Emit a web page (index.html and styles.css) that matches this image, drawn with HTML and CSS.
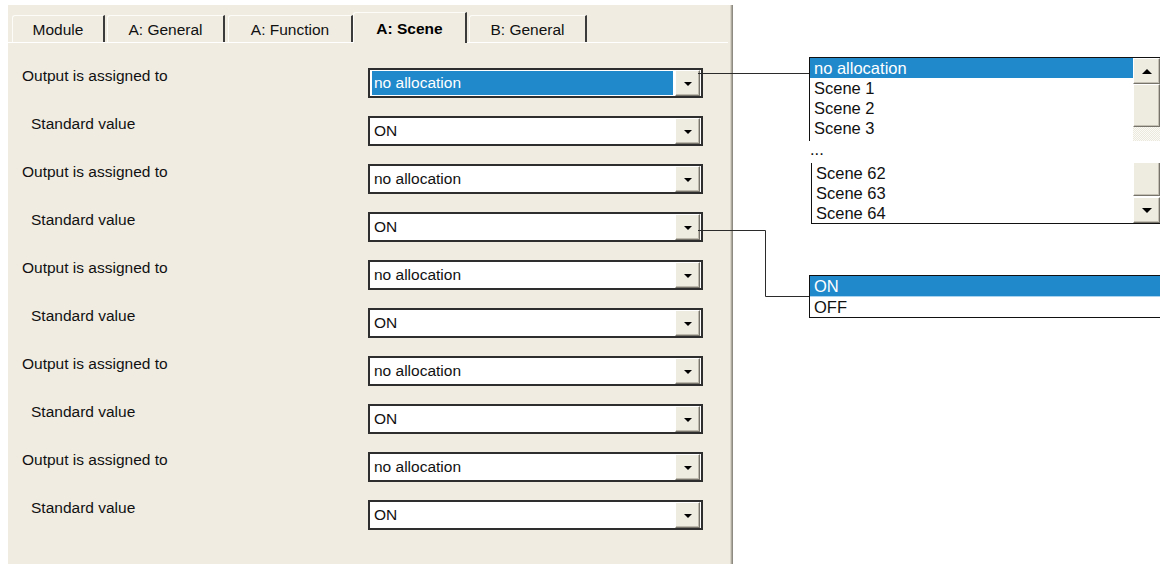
FILE: index.html
```html
<!DOCTYPE html>
<html lang="en">
<head>
<meta charset="utf-8">
<title>A: Scene</title>
<link rel="stylesheet" href="styles.css">
</head>
<body>
<div class="page">
  <section class="dialog">
    <nav class="tabs">
      <span class="tab tab-module">Module</span>
      <span class="tab tab-a-general">A: General</span>
      <span class="tab tab-a-function">A: Function</span>
      <span class="tab tab-a-scene is-active">A: Scene</span>
      <span class="tab tab-b-general">B: General</span>
    </nav>

    <div class="params">
      <div class="param">
        <span class="param-label">Output is assigned to</span>
        <div class="combo"><span class="combo-value is-selected">no allocation</span><span class="combo-btn"></span></div>
      </div>
      <div class="param param-sub">
        <span class="param-label">Standard value</span>
        <div class="combo"><span class="combo-value">ON</span><span class="combo-btn"></span></div>
      </div>
      <div class="param">
        <span class="param-label">Output is assigned to</span>
        <div class="combo"><span class="combo-value">no allocation</span><span class="combo-btn"></span></div>
      </div>
      <div class="param param-sub">
        <span class="param-label">Standard value</span>
        <div class="combo"><span class="combo-value">ON</span><span class="combo-btn"></span></div>
      </div>
      <div class="param">
        <span class="param-label">Output is assigned to</span>
        <div class="combo"><span class="combo-value">no allocation</span><span class="combo-btn"></span></div>
      </div>
      <div class="param param-sub">
        <span class="param-label">Standard value</span>
        <div class="combo"><span class="combo-value">ON</span><span class="combo-btn"></span></div>
      </div>
      <div class="param">
        <span class="param-label">Output is assigned to</span>
        <div class="combo"><span class="combo-value">no allocation</span><span class="combo-btn"></span></div>
      </div>
      <div class="param param-sub">
        <span class="param-label">Standard value</span>
        <div class="combo"><span class="combo-value">ON</span><span class="combo-btn"></span></div>
      </div>
      <div class="param">
        <span class="param-label">Output is assigned to</span>
        <div class="combo"><span class="combo-value">no allocation</span><span class="combo-btn"></span></div>
      </div>
      <div class="param param-sub">
        <span class="param-label">Standard value</span>
        <div class="combo"><span class="combo-value">ON</span><span class="combo-btn"></span></div>
      </div>
    </div>
  </section>

  <aside class="callouts">
    <!-- scene choices: first entries, gap, last entries -->
    <div class="list-head">
      <div class="list-items">
        <div class="list-row is-selected">no allocation</div>
        <div class="list-row">Scene 1</div>
        <div class="list-row">Scene 2</div>
        <div class="list-row">Scene 3</div>
      </div>
      <div class="scrollbar">
        <span class="sb-btn sb-up"></span>
        <span class="sb-thumb"></span>
        <span class="sb-track"></span>
      </div>
    </div>
    <div class="list-gap">...</div>
    <div class="list-tail">
      <div class="list-items">
        <div class="list-row">Scene 62</div>
        <div class="list-row">Scene 63</div>
        <div class="list-row">Scene 64</div>
      </div>
      <div class="scrollbar">
        <span class="sb-thumb sb-thumb-end"></span>
        <span class="sb-btn sb-down"></span>
      </div>
    </div>

    <!-- standard value choices -->
    <div class="list-onoff">
      <div class="list-row is-selected row-on">ON</div>
      <div class="list-row">OFF</div>
    </div>
  </aside>

  <svg class="leaders" width="1160" height="564" viewBox="0 0 1160 564">
    <path d="M698 73.5 H809" />
    <path d="M698 230.5 H765.5 V296.5 H809" />
  </svg>
</div>
</body>
</html>
```

FILE: styles.css
```css
html, body {
  margin: 0;
  background: #fff;
}

body {
  width: 1160px;
  height: 564px;
  overflow: hidden;
  font-family: "Liberation Sans", Arial, sans-serif;
  color: #111;
}

.page {
  position: relative;
  display: flex;
  align-items: flex-start;
  height: 564px;
}

/* ---------- parameter dialog ---------- */
.dialog {
  box-sizing: border-box;
  width: 722px;
  height: 559px;
  margin: 5px 0 0 8px;
  padding-top: 7px;
  background: #f0ece2;
  box-shadow: 1px 0 0 #d7d3c7, 2px 0 0 #aeaa9e, 3px 0 0 #8e8b82;
}

.tabs {
  display: flex;
  align-items: flex-end;
  height: 30px;
  padding-left: 4px;
  margin-right: 2px;
  border-bottom: 1px solid #fff;
}

.tab {
  box-sizing: border-box;
  height: 27px;
  display: flex;
  align-items: center;
  justify-content: center;
  padding-top: 2px;
  font-size: 15.5px;
  background: #f0ece2;
  border-top: 1px solid #fdfcf8;
  border-left: 1px solid #fdfcf8;
  border-right: 2px solid #3b3b3b;
  border-radius: 3px 0 0 0;
}

.tab-module { width: 93px; margin-right: 2px; }
.tab-a-general { width: 118px; margin-right: 3px; }
.tab-a-function { width: 125px; }
.tab-a-scene { width: 114px; }
.tab-b-general { width: 118px; margin-left: 2px; }

.tab.is-active {
  height: 31px;
  margin-bottom: -1px;
  padding-top: 1px;
  font-weight: bold;
  color: #000;
}

.params {
  padding-top: 25px;
}

.param {
  display: grid;
  grid-template-columns: 360px 335px;
  height: 48px;
  align-items: start;
}

.param-label {
  padding-left: 14px;
  font-size: 15.5px;
  line-height: 15px;
}

.param-sub .param-label {
  padding-left: 23px;
}

.combo {
  box-sizing: border-box;
  display: flex;
  height: 30px;
  padding: 0 1px 0 2px;
  background: #fff;
  border: 2px solid #2e2e2e;
}

.combo-value {
  flex: 1;
  display: flex;
  align-items: center;
  margin: 1px 2px 1px 0;
  padding-left: 2px;
  font-size: 15.5px;
  color: #111;
}

.combo-value.is-selected {
  background: #2089cb;
  color: #fff;
}

.combo-btn {
  box-sizing: border-box;
  width: 25px;
  display: flex;
  align-items: center;
  justify-content: center;
  padding-top: 2px;
  background: #eeebe0;
  border-top: 1px solid #fff;
  border-left: 1px solid #fff;
  border-right: 1px solid #77746b;
  border-bottom: 1px solid #77746b;
  box-shadow: inset -1px -1px 0 #bdb9ad;
}

.combo-btn::after {
  content: "";
  border-left: 4px solid transparent;
  border-right: 4px solid transparent;
  border-top: 4px solid #000;
}

/* ---------- option lists ---------- */
.callouts {
  width: 351px;
  margin-left: 79px;
  padding-top: 57px;
  font-size: 16.5px;
}

.list-items {
  flex: 1;
}

.list-row {
  height: 20px;
  line-height: 20px;
  padding-left: 4px;
  color: #111;
  white-space: nowrap;
}

.list-row.is-selected {
  background: #2089cb;
  color: #fff;
}

.list-head {
  display: flex;
  height: 83px;
  overflow: hidden;
  border-top: 1px solid #111;
  border-left: 1px solid #111;
}

.list-gap {
  height: 22px;
  line-height: 16px;
  padding-left: 1px;
  color: #111;
}

.list-tail {
  display: flex;
  height: 60px;
  margin-left: 2px;
  border-left: 1px solid #111;
  border-bottom: 1px solid #111;
}

.scrollbar {
  width: 27px;
  display: flex;
  flex-direction: column;
}

.sb-btn,
.sb-thumb {
  box-sizing: border-box;
  background: #eeebe0;
  border-top: 1px solid #fff;
  border-left: 1px solid #fff;
  border-right: 1px solid #77746b;
  border-bottom: 1px solid #77746b;
  box-shadow: inset -1px -1px 0 #c4c0b4;
}

.sb-btn {
  height: 26px;
  display: flex;
  align-items: center;
  justify-content: center;
}

.sb-up::after {
  content: "";
  border-left: 5px solid transparent;
  border-right: 5px solid transparent;
  border-bottom: 5px solid #000;
}

.sb-down::after {
  content: "";
  border-left: 5px solid transparent;
  border-right: 5px solid transparent;
  border-top: 5px solid #000;
}

.sb-thumb {
  height: 43px;
}

.sb-thumb-end {
  height: 33px;
  margin-bottom: 1px;
  border-top: none;
}

.sb-track {
  flex: 1;
  background: repeating-conic-gradient(#ebe8dd 0 25%, #fbfaf6 0 50%) 0 0 / 2px 2px;
}

.list-onoff {
  margin-top: 51px;
  border: 1px solid #111;
  border-right: none;
}

.row-on {
  height: 21px;
  box-sizing: border-box;
  border-bottom: 1px solid #a9d3ef;
  color: #dcedf9;
}

/* ---------- leader lines ---------- */
.leaders {
  position: absolute;
  top: 0;
  left: 0;
  pointer-events: none;
}

.leaders path {
  fill: none;
  stroke: #2b2b2b;
  stroke-width: 1;
}
```
